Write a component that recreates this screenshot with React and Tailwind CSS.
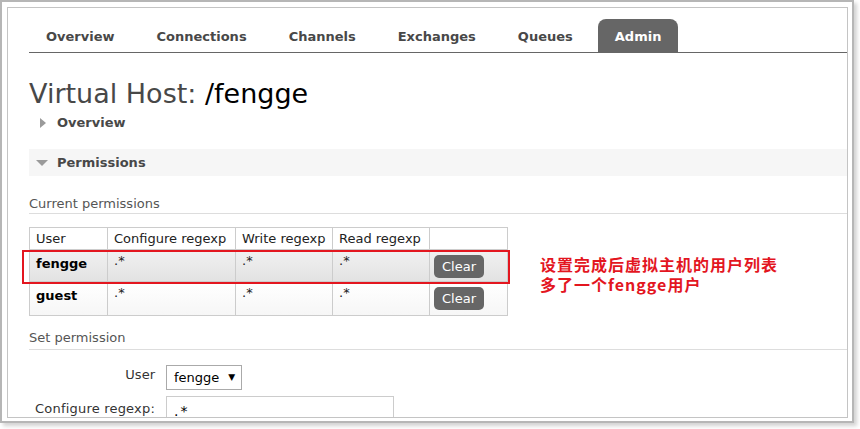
import React from "react";

const font = { fontFamily: '"DejaVu Sans", Verdana, sans-serif' };

function Tab({ label, active }) {
  return (
    <li
      className={
        "h-[33px] px-[17px] pt-[2px] flex items-center text-[13px] font-bold " +
        (active ? "bg-[#666666] text-white rounded-t-[8px]" : "text-[#484848]")
      }
    >
      {label}
    </li>
  );
}

function ClearBtn() {
  return (
    <button className="h-[23px] w-[50px] rounded-[5px] bg-[#666666] text-white text-[13px] leading-[23px] flex items-center justify-center">
      Clear
    </button>
  );
}

export default function App() {
  return (
    <div className="w-[860px] h-[429px] bg-white" style={font}>
      <div className="w-[854px] h-[423px] border-2 border-[#b6b6b6] bg-white shadow-[3px_3px_4px_rgba(0,0,0,0.18)] pt-[5px] pl-[5px]">
        <div className="relative w-[841px] h-[411px] border border-[#c4c4c4] overflow-hidden bg-white">
          <div className="pl-[21px] pt-[11px]">
            {/* Tabs */}
            <ul className="flex gap-2 border-b border-[#666666]">
              <Tab label="Overview" />
              <Tab label="Connections" />
              <Tab label="Channels" />
              <Tab label="Exchanges" />
              <Tab label="Queues" />
              <Tab label="Admin" active />
            </ul>

            {/* Title */}
            <h1 className="mt-[25px] text-[27px] leading-[32px] text-[#484848] font-normal whitespace-nowrap">
              Virtual Host: <span className="text-black">/fengge</span>
            </h1>

            {/* Overview toggle */}
            <div className="mt-[4px] h-[18px] flex items-center text-[13px] font-bold text-[#484848]">
              <span className="ml-[11px] w-0 h-0 border-y-[5px] border-y-transparent border-l-[6px] border-l-[#9a9a9a]" />
              <span className="ml-[11px]">Overview</span>
            </div>

            {/* Permissions bar */}
            <div className="mt-[17px] h-[27px] bg-[#f6f6f6] flex items-center text-[13px] font-bold text-[#484848]">
              <span className="ml-[7px] w-0 h-0 border-x-[6px] border-x-transparent border-t-[6px] border-t-[#9a9a9a]" />
              <span className="ml-[9px]">Permissions</span>
            </div>

            <h2 className="mt-[19px] text-[13px] leading-[18px] text-[#555555] font-normal border-b border-[#dddddd]">
              Current permissions
            </h2>

            <table className="mt-[13px] border-collapse text-[13px] text-[#222222]">
              <thead>
                <tr className="h-[22px]">
                  <th className="w-[78px] border border-[#cccccc] px-[6px] text-left font-normal leading-[16px]">User</th>
                  <th className="w-[128px] border border-[#cccccc] px-[6px] text-left font-normal leading-[16px]">Configure regexp</th>
                  <th className="w-[97px] border border-[#cccccc] px-[6px] text-left font-normal leading-[16px]">Write regexp</th>
                  <th className="w-[97px] border border-[#cccccc] px-[6px] text-left font-normal leading-[16px]">Read regexp</th>
                  <th className="w-[78px] border border-[#cccccc]"></th>
                </tr>
              </thead>
              <tbody>
                <tr className="h-[32px] bg-[linear-gradient(#f1f1f1,#e2e2e2)]">
                  <td className="border border-[#cccccc] px-[6px] pt-[5px] align-top font-bold leading-[18px] text-black">fengge</td>
                  <td className="border border-[#cccccc] px-[6px] pt-[3px] align-top leading-[16px]">.*</td>
                  <td className="border border-[#cccccc] px-[6px] pt-[3px] align-top leading-[16px]">.*</td>
                  <td className="border border-[#cccccc] px-[6px] pt-[3px] align-top leading-[16px]">.*</td>
                  <td className="border border-[#cccccc] pl-[4px] pt-[5px] align-top"><ClearBtn /></td>
                </tr>
                <tr className="h-[33px] bg-[linear-gradient(#ffffff,#f6f6f6)]">
                  <td className="border border-[#cccccc] px-[6px] pt-[5px] align-top font-bold leading-[18px] text-black">guest</td>
                  <td className="border border-[#cccccc] px-[6px] pt-[3px] align-top leading-[16px]">.*</td>
                  <td className="border border-[#cccccc] px-[6px] pt-[3px] align-top leading-[16px]">.*</td>
                  <td className="border border-[#cccccc] px-[6px] pt-[3px] align-top leading-[16px]">.*</td>
                  <td className="border border-[#cccccc] pl-[4px] pt-[5px] pb-[5px] align-top"><ClearBtn /></td>
                </tr>
              </tbody>
            </table>

            <h2 className="mt-[13px] text-[13px] leading-[18px] pb-[2px] text-[#555555] font-normal border-b border-[#dddddd]">
              Set permission
            </h2>

            <div className="mt-[15px] flex items-start">
              <label className="w-[126px] pt-[1px] text-right text-[13px] leading-[18px] text-[#333333]">User</label>
              <div className="ml-[11px] h-[25px] w-[76px] border border-[#aaaaaa] bg-white flex items-center pl-[7px] text-[13px] text-black">
                fengge
                <span className="ml-[9px] text-[9px]">▼</span>
              </div>
            </div>

            <div className="mt-[6px] flex items-start">
              <label className="w-[126px] pt-[4px] text-right text-[13px] tracking-[0.2px] leading-[18px] text-[#333333] whitespace-nowrap">Configure regexp:</label>
              <div className="ml-[11px] h-[28px] w-[228px] border border-[#cccccc] bg-white pl-[7px] pt-[4px] text-[14px] tracking-[2px] text-black">
                .*
              </div>
            </div>
          </div>

          {/* annotation overlay */}
          <div className="absolute left-[14px] top-[242px] w-[488px] h-[34px] border-2 border-[#e3161f]" />
          <div
            className="absolute left-[532px] top-[246px] text-[16px] leading-[20px] font-bold tracking-[1px] text-[#e3161f]"
            style={{ fontFamily: '"Noto Sans CJK SC", "DejaVu Sans", sans-serif' }}
          >
            <div>设置完成后虚拟主机的用户列表</div>
            <div>多了一个fengge用户</div>
          </div>
        </div>
      </div>
    </div>
  );
}
